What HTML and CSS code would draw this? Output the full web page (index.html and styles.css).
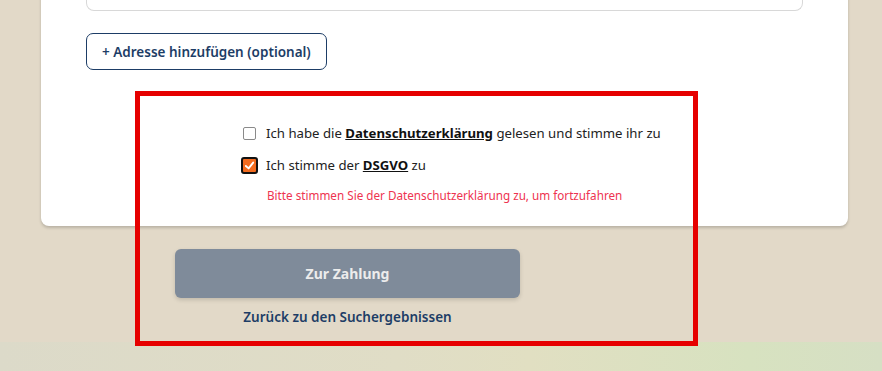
FILE: index.html
```html
<!DOCTYPE html>
<html lang="de">
<head>
    <meta charset="UTF-8">
    <meta name="viewport" content="width=device-width, initial-scale=1.0">
    <title>Buchung - Kontaktdaten</title>
    <link rel="stylesheet" href="styles.css">
</head>
<body>
    <div class="page">
        <div class="card">
            <div class="field"></div>

            <button type="button" class="add-address">+ Adresse hinzufügen (optional)</button>

            <div class="consent">
                <label class="check-row">
                    <span class="box-slot"><span class="box"></span></span>
                    <span>Ich habe die <a href="#">Datenschutzerklärung</a> gelesen und stimme ihr zu</span>
                </label>
                <label class="check-row">
                    <span class="box-slot">
                        <span class="box checked">
                            <svg width="11" height="11" viewBox="0 0 12 12"><path d="M2 6.5 L5 9.2 L10 2.8" fill="none" stroke="#fff" stroke-width="2" stroke-linecap="round" stroke-linejoin="round"/></svg>
                        </span>
                    </span>
                    <span>Ich stimme der <a href="#">DSGVO</a> zu</span>
                </label>
                <div class="error-message">Bitte stimmen Sie der Datenschutzerklärung zu, um fortzufahren</div>
            </div>
        </div>

        <div class="actions">
            <button type="button" class="pay-btn" disabled>Zur Zahlung</button>
            <a href="#" class="back-link">Zurück zu den Suchergebnissen</a>
        </div>

        <div class="footer-strip"></div>
    </div>

    <!-- highlight marker -->
    <div class="highlight"></div>
</body>
</html>
```

FILE: styles.css
```css
body {
    font-family: "Noto Sans", "Open Sans", sans-serif;
    background-color: #e2d9c8;
    margin: 0;
    padding: 0;
    height: 371px;
    overflow: hidden;
}

.page {
    margin-top: -40px;
}

.card {
    background-color: white;
    margin-left: 41px;
    width: 807px;
    box-sizing: border-box;
    padding: 0 45px 0 45px;
    border-radius: 0 0 8px 8px;
    box-shadow: 0 2px 3px rgba(0, 0, 0, 0.18);
    height: 266px;
}

.field {
    height: 51px;
    border: 1px solid #d8d8d8;
    border-top: none;
    border-radius: 0 0 8px 8px;
    box-sizing: border-box;
}

.add-address {
    display: block;
    margin-top: 22px;
    height: 37px;
    padding: 0 15px;
    background: white;
    border: 1px solid #1d3d66;
    border-radius: 7px;
    color: #1d3d66;
    font-family: inherit;
    font-size: 13.5px;
    font-weight: 600;
}

.consent {
    padding-left: 155px;
    margin-top: 47px;
    color: #222;
    font-size: 13.2px;
}

.check-row {
    display: flex;
    align-items: center;
    gap: 8px;
    height: 32px;
}

.check-row a {
    color: #111;
    font-weight: 700;
    text-decoration: underline;
}

.box-slot {
    width: 17px;
    display: flex;
    justify-content: center;
}

.box {
    width: 11px;
    height: 11px;
    border: 1px solid #8a8a8a;
    border-radius: 2px;
    display: flex;
    align-items: center;
    justify-content: center;
}

.box.checked {
    width: 13px;
    height: 13px;
    background-color: #f26b1f;
    border: 2px solid #111;
    border-radius: 3px;
}

.error-message {
    color: #ee3350;
    font-size: 11.7px;
    margin-top: 6px;
    padding-left: 26px;
}

.actions {
    margin-top: 23px;
    margin-left: 175px;
    width: 345px;
    display: flex;
    flex-direction: column;
    align-items: center;
}

.pay-btn {
    width: 100%;
    height: 49px;
    background-color: #7f8b9a;
    color: #ececec;
    border: none;
    border-radius: 6px;
    font-family: inherit;
    font-size: 14px;
    font-weight: 700;
    box-shadow: 0 2px 4px rgba(0, 0, 0, 0.15);
}

.back-link {
    margin-top: 10px;
    color: #1d3d66;
    font-size: 13.5px;
    font-weight: 600;
    text-decoration: none;
}

.footer-strip {
    margin-top: 16px;
    height: 40px;
    background: linear-gradient(90deg, #dcdac9 0%, #e0ddc6 45%, #e1dfc2 60%, #d7e2c0 85%, #d6dfc4 100%);
}

.highlight {
    position: absolute;
    left: 135px;
    top: 91px;
    width: 563px;
    height: 255px;
    border: 5px solid #e60000;
    box-sizing: border-box;
}
```
